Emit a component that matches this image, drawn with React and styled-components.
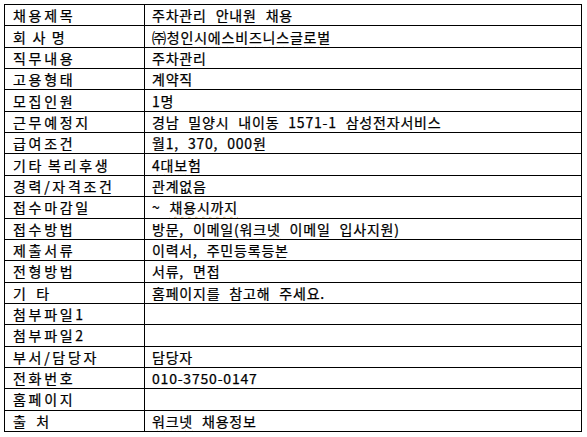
import React from 'react';
import styled, { createGlobalStyle } from 'styled-components';

const GlobalStyle = createGlobalStyle`
  html, body {
    margin: 0;
    padding: 0;
    background: #ffffff;
  }
  body {
    font-family: "Noto Sans CJK KR", "Noto Sans", sans-serif;
    color: #000;
  }
`;

const Page = styled.div`
  padding: 4px;
`;

const Sheet = styled.div`
  display: grid;
  grid-template-columns: 140px 1fr;
  grid-template-rows: repeat(20, 1fr);
  width: 578px;
  height: 428px;
  box-sizing: border-box;
  border-top: 1px solid #000;
  border-left: 1px solid #000;
`;

const Cell = styled.div`
  display: flex;
  align-items: center;
  box-sizing: border-box;
  border-right: 1px solid #000;
  border-bottom: 1px solid #000;
  font-size: 14px;
  line-height: 1;
  white-space: pre;
  overflow: hidden;
  -webkit-text-stroke: 0.25px #000;
`;

const Label = styled(Cell)`
  padding-left: 8px;
  letter-spacing: 2.7px;
  word-spacing: -2px;
`;

const Value = styled(Cell)`
  padding-left: 7px;
  letter-spacing: 0.8px;
  word-spacing: 5px;
`;

const Typo = styled.span`
  text-decoration: underline wavy #d8a860;
  text-decoration-thickness: 1px;
  text-underline-offset: 3px;
`;

const rows = [
  ['채용제목', '주차관리 안내원 채용'],
  ['회 사 명', <Typo key="c">㈜청인시에스비즈니스글로벌</Typo>],
  ['직무내용', '주차관리'],
  ['고용형태', '계약직'],
  ['모집인원', '1명'],
  ['근무예정지', '경남 밀양시 내이동 1571-1 삼성전자서비스'],
  ['급여조건', '월1, 370, 000원'],
  ['기타 복리후생', <Typo key="b">4대보험</Typo>],
  ['경력/자격조건', '관계없음'],
  ['접수마감일', <>~ <Typo>채용시까지</Typo></>],
  ['접수방법', <>방문, 이메일(<Typo>워크넷</Typo> 이메일 입사지원)</>],
  ['제출서류', '이력서, 주민등록등본'],
  ['전형방법', '서류, 면접'],
  ['기  타', '홈페이지를 참고해 주세요.'],
  ['첨부파일1', ''],
  ['첨부파일2', ''],
  ['부서/담당자', '담당자'],
  ['전화번호', '010-3750-0147'],
  ['홈페이지', ''],
  ['출  처', <><Typo>워크넷</Typo> 채용정보</>],
];

export default function App() {
  return (
    <Page>
      <GlobalStyle />
      <Sheet>
        {rows.map(([label, value], i) => (
          <React.Fragment key={i}>
            <Label>{label}</Label>
            <Value>{value}</Value>
          </React.Fragment>
        ))}
      </Sheet>
    </Page>
  );
}
